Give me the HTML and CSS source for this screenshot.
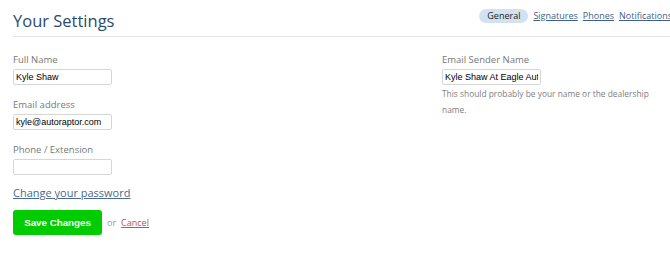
FILE: index.html
```html
<!DOCTYPE html>
<html lang="en">
<head>
  <meta charset="UTF-8">
  <title>Your Settings</title>
  <link rel="stylesheet" href="styles.css">
</head>
<body>
  <div class="page">
    <div class="header">
      <h1>Your Settings</h1>
      <ul class="tabs">
        <li class="active"><a href="#">General</a></li>
        <li><a href="#">Signatures</a></li>
        <li><a href="#">Phones</a></li>
        <li><a href="#">Notifications</a></li>
      </ul>
    </div>

    <form class="settings">
      <div class="col">
        <div class="field">
          <label>Full Name</label>
          <input type="text" value="Kyle Shaw">
        </div>
        <div class="field">
          <label>Email address</label>
          <input type="text" value="kyle@autoraptor.com">
        </div>
        <div class="field">
          <label>Phone / Extension</label>
          <input type="text" value="">
        </div>
        <a class="password-link" href="#">Change your password</a>
        <div class="actions">
          <button type="button">Save Changes</button>
          <span class="or">or</span>
          <a class="cancel" href="#">Cancel</a>
        </div>
      </div>

      <div class="col">
        <div class="field">
          <label>Email Sender Name</label>
          <input type="text" value="Kyle Shaw At Eagle Auto">
          <p class="hint">This should probably be your name or the dealership name.</p>
        </div>
      </div>
    </form>
  </div>
</body>
</html>
```

FILE: styles.css
```css
:root {
  --title-color: #2b4a6b;
  --label-color: #777777;
  --link-color: #3f6189;
  --rule-color: #e3e6ea;
  --tab-bg: #d3e2f0;
  --save-green: #00cc00;
  --cancel-red: #c0504d;
}

* {
  margin: 0;
  padding: 0;
  box-sizing: border-box;
}

html, body {
  overflow: hidden;
}

body {
  font-family: 'Open Sans', 'Noto Sans', Arial, sans-serif;
  background: #ffffff;
  color: #333333;
}

.page {
  width: 700px;
  padding-left: 13px;
}

.header {
  display: flex;
  justify-content: space-between;
  align-items: flex-start;
  padding-top: 10px;
  padding-bottom: 5px;
  border-bottom: 1px solid var(--rule-color);
}

h1 {
  font-size: 16.5px;
  font-weight: 400;
  line-height: 21px;
  color: var(--title-color);
}

.tabs {
  list-style: none;
  display: flex;
  gap: 5px;
  font-size: 9px;
  line-height: 12px;
  margin-top: -1px;
  padding-right: 28px;
}

.tabs li {
  padding: 1px 0;
}

.tabs a {
  color: var(--link-color);
}

.tabs li.active {
  background: var(--tab-bg);
  border-radius: 7px;
  padding: 1px 8px;
}

.tabs li.active a {
  color: #222222;
  text-decoration: none;
}

.settings {
  display: grid;
  grid-template-columns: 429px 1fr;
  padding-top: 16px;
}

.field {
  margin-bottom: 13px;
}

label {
  display: block;
  font-size: 9.5px;
  line-height: 14px;
  color: var(--label-color);
  margin-bottom: 2px;
}

input {
  display: block;
  width: 99px;
  height: 16px;
  padding: 0 2px;
  font-family: 'Liberation Sans', Arial, sans-serif;
  font-size: 9px;
  color: #000000;
  border: 1px solid #d6d6d6;
  border-radius: 2px;
}

.hint {
  font-size: 8.4px;
  line-height: 16px;
  color: #808080;
  margin-top: 1px;
  width: 215px;
}

.password-link {
  display: block;
  width: fit-content;
  font-size: 11px;
  line-height: 14px;
  color: #4a6a8c;
  margin-top: -2px;
}

.actions {
  display: flex;
  align-items: center;
  margin-top: 10px;
}

button {
  background: var(--save-green);
  color: #ffffff;
  border: none;
  border-radius: 3px;
  width: 89px;
  height: 25px;
  font-family: 'Liberation Sans', Arial, sans-serif;
  font-weight: bold;
  font-size: 9.75px;
}

.or {
  font-size: 9px;
  color: #8a9bb0;
  margin: 0 5px;
}

.cancel {
  font-size: 9px;
  color: var(--cancel-red);
}
```
